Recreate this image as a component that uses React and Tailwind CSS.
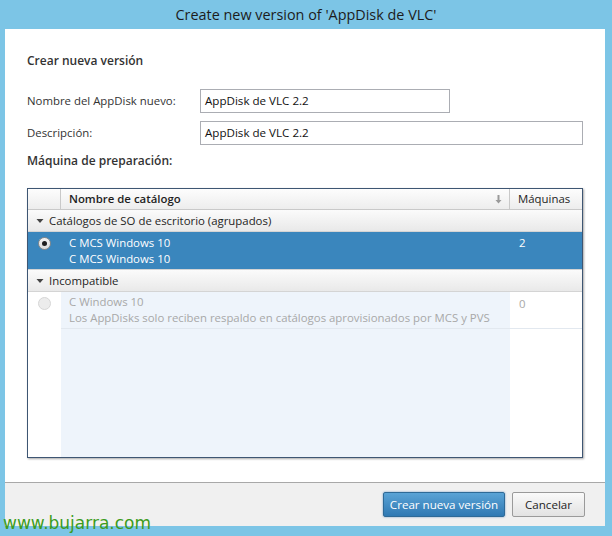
import React from 'react';

const font = { fontFamily: '"Open Sans", "Noto Sans", sans-serif' };

const Radio = ({ checked, disabled }) => (
  <span
    className={`flex h-[13px] w-[13px] items-center justify-center rounded-full border ${
      disabled ? 'border-[#d6d6d6] bg-[#ececec]' : 'border-[#8a8a8a] bg-gradient-to-b from-[#f4f4f4] to-[#dcdcdc]'
    }`}
  >
    {checked && <span className="h-[5px] w-[5px] rounded-full bg-[#1e1e1e]" />}
  </span>
);

const Caret = () => (
  <svg width="8" height="6" viewBox="0 0 8 6" className="mr-[5px]">
    <path d="M0.5 1 L7.5 1 L4 5 Z" fill="#444" />
  </svg>
);

const GroupRow = ({ label }) => (
  <div className="flex h-[22px] shrink-0 items-center border-b border-[#d4d4d4] bg-gradient-to-b from-[#fbfbfb] to-[#e9e9e9] pl-[8px] text-[11.4px] text-[#1e1e1e]">
    <Caret />
    {label}
  </div>
);

export default function App() {
  return (
    <div className="flex h-[536px] w-[612px] flex-col bg-[#7cc5e6]" style={font}>
      <div className="flex h-[29px] items-center justify-center text-[14.4px] text-[#1c1c1c]">
        Create new version of 'AppDisk de VLC'
      </div>

      <div className="flex flex-1 flex-col pl-[5px] pr-[7px]">
        <div className="flex flex-1 flex-col bg-white px-[22px] pt-[23px]">
          <div className="text-[12px] font-semibold text-[#333]">Crear nueva versión</div>

          <div className="mt-[19px] flex items-center">
            <span className="w-[173px] text-[11.4px] text-[#333]">Nombre del AppDisk nuevo:</span>
            <div className="flex h-[24px] w-[250px] items-center border border-[#abadb3] px-[4px] text-[11.6px] text-[#111]">
              AppDisk de VLC 2.2
            </div>
          </div>

          <div className="mt-[8px] flex items-center">
            <span className="w-[173px] text-[11.4px] text-[#333]">Descripción:</span>
            <div className="flex h-[24px] flex-1 items-center border border-[#abadb3] px-[4px] text-[11.6px] text-[#111]">
              AppDisk de VLC 2.2
            </div>
          </div>

          <div className="mt-[7px] text-[12px] font-semibold text-[#333]">Máquina de preparación:</div>

          <div className="mt-[18px] flex h-[270px] flex-col overflow-hidden border border-[#3e5673] shadow-[1px_1px_2px_rgba(0,0,0,0.35)]">
            <div className="flex h-[21px] shrink-0 border-b border-[#c9c9c9] bg-gradient-to-b from-[#fdfdfd] to-[#ededed] text-[11.4px] text-[#1e1e1e]">
              <div className="w-[33px] border-r border-[#c9c9c9]" />
              <div className="flex flex-1 items-center justify-between border-r border-[#c9c9c9] pl-[8px] pr-[7px] font-semibold">
                Nombre de catálogo
                <svg width="7" height="9" viewBox="0 0 7 9">
                  <path d="M2.5 0 H4.5 V5 H6.5 L3.5 8.5 L0.5 5 H2.5 Z" fill="#9a9a9a" />
                </svg>
              </div>
              <div className="flex w-[72px] items-center pl-[8px]">Máquinas</div>
            </div>

            <GroupRow label="Catálogos de SO de escritorio (agrupados)" />

            <div className="flex h-[38px] shrink-0 border-b border-[#d4d4d4] bg-[#3a86bd] text-[11.4px] leading-[16px] text-white">
              <div className="flex w-[33px] justify-center pt-[5px]">
                <Radio checked />
              </div>
              <div className="flex flex-1 flex-col justify-center pl-[8px]">
                <span>C MCS Windows 10</span>
                <span>C MCS Windows 10</span>
              </div>
              <div className="w-[72px] pl-[9px] pt-[3px]">2</div>
            </div>

            <GroupRow label="Incompatible" />

            <div className="flex flex-1">
              <div className="flex w-[33px] justify-center bg-white pt-[5px]">
                <div className="h-[37px]">
                  <Radio disabled />
                </div>
              </div>
              <div className="flex flex-1 flex-col bg-[#eef4fb]">
                <div className="flex h-[37px] flex-col justify-center whitespace-nowrap border-b border-[#e2e8ef] pl-[8px] text-[11.4px] leading-[16px] text-[#a8a8a8]">
                  <span>C Windows 10</span>
                  <span>Los AppDisks solo reciben respaldo en catálogos aprovisionados por MCS y PVS</span>
                </div>
              </div>
              <div className="w-[72px] bg-white">
                <div className="h-[37px] border-b border-[#e2e8ef] pl-[9px] pt-[3px] text-[11.4px] text-[#a8a8a8]">0</div>
              </div>
            </div>
          </div>
        </div>

        <div className="flex h-[44px] items-center justify-end gap-[7px] border-t border-[#a8a8a8] bg-[#f0f0f0] pr-[20px] text-[11.6px]">
          <button className="h-[25px] w-[122px] rounded-[2px] border border-[#2e6a97] bg-gradient-to-b from-[#5aa3d6] to-[#2f79b3] text-white shadow-[0_0_2px_rgba(0,80,160,0.6)]">
            Crear nueva versión
          </button>
          <button className="h-[25px] w-[73px] rounded-[2px] border border-[#9a9a9a] bg-gradient-to-b from-[#fafafa] to-[#e2e2e2] text-[#1e1e1e]">
            Cancelar
          </button>
        </div>
      </div>

      <div className="relative h-[10px]">
        <span
          className="absolute bottom-[4px] left-[3px] text-[17px] leading-none text-[#3c9c1c]"
          style={{ fontFamily: '"DejaVu Sans", Verdana, sans-serif' }}
        >
          www.bujarra.com
        </span>
      </div>
    </div>
  );
}
